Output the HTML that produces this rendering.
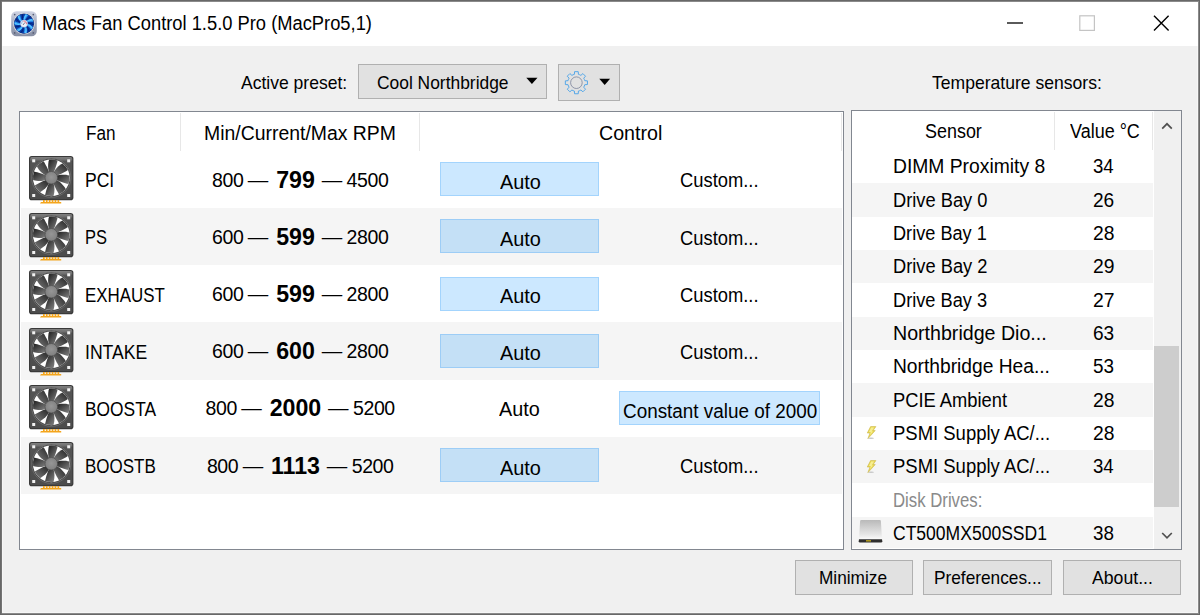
<!DOCTYPE html>
<html lang="en"><head><meta charset="utf-8"><title>Macs Fan Control</title>
<style>
html,body{margin:0;padding:0}
body{width:1200px;height:615px;overflow:hidden;position:relative;background:#f0f0f0;font-family:"Liberation Sans",sans-serif;font-size:19.5px;color:#000}
.abs,.t,.rpm,.btn,.row,.ab{position:absolute}
.t{white-space:nowrap;line-height:1;transform-origin:0 0}
#frame{left:0;top:0;width:1198px;height:613px;border:1px solid #686868;z-index:50;pointer-events:none;box-shadow:inset 0 0 0 1px #8a8a8a,inset 0 0 0 2px rgba(255,255,255,.4)}
#titlebar{left:2px;top:2px;width:1196px;height:44px;background:#fff}
.btn{background:#e1e1e1;border:1px solid #b0b0b0;box-sizing:border-box}
.tbl{position:absolute;background:#fff;border:1px solid #828790;box-sizing:border-box}
.row{background:#f5f5f5}
.hd{position:absolute;width:1px;background:#e7e7e7}
.ab{background:#cce8ff;border:1px solid #a3d4fd;box-sizing:border-box}
.ab.g{background:#c4e0f6;border-color:#9dcdf6}
.rpm{width:239px;height:57px;line-height:55.6px;text-align:center;white-space:nowrap}
.rpm{letter-spacing:-0.4px;word-spacing:-0.6px}
.rpm b{font-size:23.2px;letter-spacing:0;margin:0 2.4px 0 3.4px;position:relative;top:1px}
.rpm i{font-style:normal;font-size:20.5px;letter-spacing:0}
svg{position:absolute;overflow:visible}

</style></head>
<body>
<div class="abs" id="titlebar"></div>
<!-- fan table -->
<div class="tbl" style="left:19px;top:111px;width:825px;height:439px"></div>
<div class="hd" style="left:180px;top:113px;height:38px"></div>
<div class="hd" style="left:419px;top:113px;height:38px"></div>
<div class="hd" style="left:841px;top:113px;height:38px"></div>
<div class="row" style="left:21px;top:208px;width:821px;height:57px"></div>
<div class="row" style="left:21px;top:322px;width:821px;height:57.5px"></div>
<div class="row" style="left:21px;top:437px;width:821px;height:57px"></div>
<!-- sensor table -->
<div class="tbl" style="left:851px;top:110px;width:331px;height:440px"></div>
<div class="hd" style="left:1054px;top:112px;height:38px"></div>
<div class="hd" style="left:1152px;top:112px;height:38px"></div>
<div class="row" style="left:852px;top:183.33px;width:301px;height:33.34px"></div>
<div class="row" style="left:852px;top:250px;width:301px;height:33.34px"></div>
<div class="row" style="left:852px;top:316.67px;width:301px;height:33.34px"></div>
<div class="row" style="left:852px;top:383.33px;width:301px;height:33.34px"></div>
<div class="row" style="left:852px;top:450px;width:301px;height:33.34px"></div>
<div class="row" style="left:852px;top:516.67px;width:301px;height:31px"></div>
<!-- scrollbar -->
<div class="abs" id="sbar" style="left:1154px;top:111px;width:27px;height:438px;background:#f0f0f0"></div>
<div class="abs" id="thumb" style="left:1154px;top:346.3px;width:25.3px;height:160.4px;background:#cdcdcd"></div>
<!-- buttons -->
<div class="btn" style="left:358px;top:64px;width:189px;height:35px"></div>
<div class="btn" style="left:558px;top:64px;width:62px;height:37px"></div>
<div class="btn" style="left:795px;top:560px;width:118px;height:35px"></div>
<div class="btn" style="left:923px;top:560px;width:129px;height:35px"></div>
<div class="btn" style="left:1063px;top:560px;width:118px;height:35px"></div>
<!-- auto buttons -->
<div class="ab" style="left:440px;top:162.00px;width:159px;height:34px"></div>
<div class="ab g" style="left:440px;top:219.25px;width:159px;height:34px"></div>
<div class="ab" style="left:440px;top:276.50px;width:159px;height:34px"></div>
<div class="ab g" style="left:440px;top:333.75px;width:159px;height:34px"></div>
<div class="ab" style="left:619px;top:391.00px;width:201px;height:34px"></div>
<div class="ab g" style="left:440px;top:448.25px;width:159px;height:34px"></div>
<div class="rpm" id="rp0" style="top:151.60px;left:180.7px">800 <i>—</i> <b>799</b> <i>—</i> 4500</div>
<div class="rpm" id="rp1" style="top:208.80px;left:180.7px">600 <i>—</i> <b>599</b> <i>—</i> 2800</div>
<div class="rpm" id="rp2" style="top:266.00px;left:180.7px">600 <i>—</i> <b>599</b> <i>—</i> 2800</div>
<div class="rpm" id="rp3" style="top:323.20px;left:180.7px">600 <i>—</i> <b>600</b> <i>—</i> 2800</div>
<div class="rpm" id="rp4" style="top:380.40px;left:180.7px">800 <i>—</i> <b>2000</b> <i>—</i> 5200</div>
<div class="rpm" id="rp5" style="top:437.60px;left:180.7px">800 <i>—</i> <b>1113</b> <i>—</i> 5200</div>
<span class="t" id="title" style="left:41.67px;top:14.40px;transform:scaleX(0.9396)">Macs Fan Control 1.5.0 Pro (MacPro5,1)</span>
<span class="t" id="ap" style="left:241.34px;top:75.41px;font-size:17.75px;transform:scaleX(0.9878)">Active preset:</span>
<span class="t" id="cn" style="left:377.13px;top:74.61px;font-size:17.75px;transform:scaleX(0.9802)">Cool Northbridge</span>
<span class="t" id="ts" style="left:932.45px;top:75.21px;font-size:17.75px;transform:scaleX(0.9891)">Temperature sensors:</span>
<span class="t" id="hfan" style="left:86.09px;top:123.51px;transform:scaleX(0.8802)">Fan</span>
<span class="t" id="hrpm" style="left:203.51px;top:123.51px;transform:scaleX(0.9954)">Min/Current/Max RPM</span>
<span class="t" id="hctl" style="left:599.26px;top:123.51px;transform:scaleX(1.0075)">Control</span>
<span class="t" id="hsen" style="left:925.40px;top:122.00px;transform:scaleX(0.9200)">Sensor</span>
<span class="t" id="hval" style="left:1069.50px;top:122.00px;transform:scaleX(0.9219)">Value °C</span>
<span class="t" id="fl0" style="left:84.55px;top:171.11px;transform:scaleX(0.8998)">PCI</span>
<span class="t" id="au0" style="left:500.09px;top:172.80px;transform:scaleX(1.0199)">Auto</span>
<span class="t" id="cu0" style="left:680.22px;top:171.40px;transform:scaleX(0.9413)">Custom...</span>
<span class="t" id="fl1" style="left:85.42px;top:228.30px;transform:scaleX(0.8429)">PS</span>
<span class="t" id="au1" style="left:500.09px;top:230.00px;transform:scaleX(1.0199)">Auto</span>
<span class="t" id="cu1" style="left:680.22px;top:228.60px;transform:scaleX(0.9413)">Custom...</span>
<span class="t" id="fl2" style="left:85.39px;top:285.50px;transform:scaleX(0.8658)">EXHAUST</span>
<span class="t" id="au2" style="left:500.09px;top:287.21px;transform:scaleX(1.0199)">Auto</span>
<span class="t" id="cu2" style="left:680.22px;top:285.81px;transform:scaleX(0.9413)">Custom...</span>
<span class="t" id="fl3" style="left:85.28px;top:342.71px;transform:scaleX(0.9021)">INTAKE</span>
<span class="t" id="au3" style="left:500.09px;top:344.41px;transform:scaleX(1.0199)">Auto</span>
<span class="t" id="cu3" style="left:680.22px;top:343.01px;transform:scaleX(0.9413)">Custom...</span>
<span class="t" id="fl4" style="left:84.53px;top:399.91px;transform:scaleX(0.8907)">BOOSTA</span>
<span class="t" id="au4" style="left:499.42px;top:399.91px;transform:scaleX(1.0143)">Auto</span>
<span class="t" id="cu4" style="left:623.21px;top:401.51px;transform:scaleX(0.9689)">Constant value of 2000</span>
<span class="t" id="fl5" style="left:85.38px;top:457.11px;transform:scaleX(0.8715)">BOOSTB</span>
<span class="t" id="au5" style="left:500.09px;top:458.80px;transform:scaleX(1.0199)">Auto</span>
<span class="t" id="cu5" style="left:680.22px;top:457.40px;transform:scaleX(0.9413)">Custom...</span>
<span class="t" id="sl0" style="left:892.96px;top:157.40px;transform:scaleX(0.9888)">DIMM Proximity 8</span>
<span class="t" id="sv0" style="left:1093.05px;top:157.41px;transform:scaleX(0.9553)">34</span>
<span class="t" id="sl1" style="left:892.70px;top:190.74px;transform:scaleX(0.9368)">Drive Bay 0</span>
<span class="t" id="sv1" style="left:1092.88px;top:190.73px;transform:scaleX(0.9792)">26</span>
<span class="t" id="sl2" style="left:892.75px;top:224.07px;transform:scaleX(0.9305)">Drive Bay 1</span>
<span class="t" id="sv2" style="left:1093.22px;top:224.07px;transform:scaleX(0.9893)">28</span>
<span class="t" id="sl3" style="left:892.72px;top:257.40px;transform:scaleX(0.9369)">Drive Bay 2</span>
<span class="t" id="sv3" style="left:1093.27px;top:257.41px;transform:scaleX(0.9907)">29</span>
<span class="t" id="sl4" style="left:892.64px;top:290.74px;transform:scaleX(0.9334)">Drive Bay 3</span>
<span class="t" id="sv4" style="left:1092.82px;top:290.73px;transform:scaleX(0.9935)">27</span>
<span class="t" id="sl5" style="left:892.59px;top:324.07px;transform:scaleX(1.0056)">Northbridge Dio...</span>
<span class="t" id="sv5" style="left:1092.96px;top:324.07px;transform:scaleX(0.9778)">63</span>
<span class="t" id="sl6" style="left:892.75px;top:357.40px;transform:scaleX(0.9850)">Northbridge Hea...</span>
<span class="t" id="sv6" style="left:1093.21px;top:357.41px;transform:scaleX(0.9688)">53</span>
<span class="t" id="sl7" style="left:893.07px;top:390.74px;transform:scaleX(0.9396)">PCIE Ambient</span>
<span class="t" id="sv7" style="left:1093.22px;top:390.74px;transform:scaleX(0.9893)">28</span>
<span class="t" id="sl8" style="left:892.75px;top:424.07px;transform:scaleX(0.9472)">PSMI Supply AC/...</span>
<span class="t" id="sv8" style="left:1093.22px;top:424.07px;transform:scaleX(0.9893)">28</span>
<span class="t" id="sl9" style="left:892.75px;top:457.40px;transform:scaleX(0.9472)">PSMI Supply AC/...</span>
<span class="t" id="sv9" style="left:1093.05px;top:457.41px;transform:scaleX(0.9553)">34</span>
<span class="t" id="sl10" style="left:892.92px;top:490.74px;color:#8a8a8a;transform:scaleX(0.8588)">Disk Drives:</span>
<span class="t" id="sl11" style="left:892.84px;top:524.07px;transform:scaleX(0.8991)">CT500MX500SSD1</span>
<span class="t" id="sv11" style="left:1092.95px;top:524.07px;transform:scaleX(0.9666)">38</span>
<span class="t" id="bmin" style="left:819.08px;top:570.41px;font-size:17.75px;transform:scaleX(0.9715)">Minimize</span>
<span class="t" id="bpre" style="left:934.46px;top:570.41px;font-size:17.75px;transform:scaleX(0.9727)">Preferences...</span>
<span class="t" id="babt" style="left:1091.84px;top:570.41px;font-size:17.75px;transform:scaleX(0.9951)">About...</span>
<svg width="0" height="0" style="position:absolute"><defs>
<linearGradient id="fsq" x1="0" y1="0" x2="0" y2="1"><stop offset="0" stop-color="#808080"/><stop offset="0.06" stop-color="#707070"/><stop offset="0.1" stop-color="#545454"/><stop offset="1" stop-color="#4c4c4c"/></linearGradient>
<linearGradient id="bg0" x1="0" y1="0" x2="1" y2="1"><stop offset="0" stop-color="#1c1c1c"/><stop offset="1" stop-color="#848484"/></linearGradient>
<linearGradient id="bg1" x1="1" y1="0" x2="0" y2="1"><stop offset="0" stop-color="#222"/><stop offset="1" stop-color="#7e7e7e"/></linearGradient>
<radialGradient id="hub" cx="0.5" cy="0.45" r="0.6"><stop offset="0" stop-color="#969696"/><stop offset="0.8" stop-color="#828282"/><stop offset="1" stop-color="#5c5c5c"/></radialGradient>
</defs></svg>
<svg style="left:28.7px;top:155.9px" width="46" height="49" viewBox="0 0 46 49">
<rect x="0" y="0" width="44.4" height="44.2" rx="2.8" fill="#3a3a3a"/>
<rect x="1.1" y="1.1" width="42.2" height="42" rx="1.8" fill="url(#fsq)"/>
<circle cx="22.3" cy="21.8" r="19.6" fill="#454545" stroke="#7d7d7d" stroke-width="0.6"/>
<circle cx="22.3" cy="21.8" r="18.4" fill="#fff"/>
<path d="M20.28,16.69 L19.77,15.16 L19.39,13.60 L19.21,11.97 L19.15,10.32 L19.20,8.66 L19.37,6.99 L19.66,5.31 L20.07,3.64 A18.3,18.3 0 0 1 28.56,4.60 L28.17,6.17 L27.75,7.72 L27.30,9.26 L26.82,10.79 L26.31,12.31 L25.77,13.82 L25.11,15.28 L24.41,16.72Z" fill="url(#bg0)"/><path d="M24.48,16.75 L25.20,15.32 L26.04,13.95 L27.07,12.67 L28.19,11.46 L29.40,10.32 L30.71,9.26 L32.10,8.27 L33.57,7.38 A18.3,18.3 0 0 1 38.89,14.07 L37.51,14.90 L36.11,15.70 L34.70,16.47 L33.28,17.22 L31.85,17.93 L30.40,18.61 L28.90,19.18 L27.39,19.70Z" fill="url(#bg1)"/><path d="M27.41,19.78 L28.94,19.27 L30.50,18.89 L32.13,18.71 L33.78,18.65 L35.44,18.70 L37.11,18.87 L38.79,19.16 L40.46,19.57 A18.3,18.3 0 0 1 39.50,28.06 L37.93,27.67 L36.38,27.25 L34.84,26.80 L33.31,26.32 L31.79,25.81 L30.28,25.27 L28.82,24.61 L27.38,23.91Z" fill="url(#bg0)"/><path d="M27.35,23.98 L28.78,24.70 L30.15,25.54 L31.43,26.57 L32.64,27.69 L33.78,28.90 L34.84,30.21 L35.83,31.60 L36.72,33.07 A18.3,18.3 0 0 1 30.03,38.39 L29.20,37.01 L28.40,35.61 L27.63,34.20 L26.88,32.78 L26.17,31.35 L25.49,29.90 L24.92,28.40 L24.40,26.89Z" fill="url(#bg1)"/><path d="M24.32,26.91 L24.83,28.44 L25.21,30.00 L25.39,31.63 L25.45,33.28 L25.40,34.94 L25.23,36.61 L24.94,38.29 L24.53,39.96 A18.3,18.3 0 0 1 16.04,39.00 L16.43,37.43 L16.85,35.88 L17.30,34.34 L17.78,32.81 L18.29,31.29 L18.83,29.78 L19.49,28.32 L20.19,26.88Z" fill="url(#bg0)"/><path d="M20.12,26.85 L19.40,28.28 L18.56,29.65 L17.53,30.93 L16.41,32.14 L15.20,33.28 L13.89,34.34 L12.50,35.33 L11.03,36.22 A18.3,18.3 0 0 1 5.71,29.53 L7.09,28.70 L8.49,27.90 L9.90,27.13 L11.32,26.38 L12.75,25.67 L14.20,24.99 L15.70,24.42 L17.21,23.90Z" fill="url(#bg1)"/><path d="M17.19,23.82 L15.66,24.33 L14.10,24.71 L12.47,24.89 L10.82,24.95 L9.16,24.90 L7.49,24.73 L5.81,24.44 L4.14,24.03 A18.3,18.3 0 0 1 5.10,15.54 L6.67,15.93 L8.22,16.35 L9.76,16.80 L11.29,17.28 L12.81,17.79 L14.32,18.33 L15.78,18.99 L17.22,19.69Z" fill="url(#bg0)"/><path d="M17.25,19.62 L15.82,18.90 L14.45,18.06 L13.17,17.03 L11.96,15.91 L10.82,14.70 L9.76,13.39 L8.77,12.00 L7.88,10.53 A18.3,18.3 0 0 1 14.57,5.21 L15.40,6.59 L16.20,7.99 L16.97,9.40 L17.72,10.82 L18.43,12.25 L19.11,13.70 L19.68,15.20 L20.20,16.71Z" fill="url(#bg1)"/>
<circle cx="22.3" cy="21.8" r="6.3" fill="url(#hub)" stroke="#4a4a4a" stroke-width="0.6"/>
<rect x="3.2" y="3.3" width="3" height="3" fill="#f2f2f2"/><rect x="38.2" y="3.3" width="3" height="3" fill="#f2f2f2"/>
<rect x="3.2" y="38" width="3" height="3" fill="#f2f2f2"/><rect x="38.2" y="38" width="3" height="3" fill="#f2f2f2"/>
<path d="M11,47.5 h21.2 v-1.5 h-2 v-1.9 h-1.7 v1.9 h-1.2 v-1.9 h-1.7 v1.9 h-1.2 v-1.9 h-1.7 v1.9 h-1.2 v-1.9 h-1.7 v1.9 h-1.2 v-1.9 h-1.7 v1.9 h-1.2 v-1.9 h-1.7 v1.9 h-2z" fill="#f4a51c"/></svg>
<svg style="left:28.7px;top:213.1px" width="46" height="49" viewBox="0 0 46 49">
<rect x="0" y="0" width="44.4" height="44.2" rx="2.8" fill="#3a3a3a"/>
<rect x="1.1" y="1.1" width="42.2" height="42" rx="1.8" fill="url(#fsq)"/>
<circle cx="22.3" cy="21.8" r="19.6" fill="#454545" stroke="#7d7d7d" stroke-width="0.6"/>
<circle cx="22.3" cy="21.8" r="18.4" fill="#fff"/>
<path d="M20.28,16.69 L19.77,15.16 L19.39,13.60 L19.21,11.97 L19.15,10.32 L19.20,8.66 L19.37,6.99 L19.66,5.31 L20.07,3.64 A18.3,18.3 0 0 1 28.56,4.60 L28.17,6.17 L27.75,7.72 L27.30,9.26 L26.82,10.79 L26.31,12.31 L25.77,13.82 L25.11,15.28 L24.41,16.72Z" fill="url(#bg0)"/><path d="M24.48,16.75 L25.20,15.32 L26.04,13.95 L27.07,12.67 L28.19,11.46 L29.40,10.32 L30.71,9.26 L32.10,8.27 L33.57,7.38 A18.3,18.3 0 0 1 38.89,14.07 L37.51,14.90 L36.11,15.70 L34.70,16.47 L33.28,17.22 L31.85,17.93 L30.40,18.61 L28.90,19.18 L27.39,19.70Z" fill="url(#bg1)"/><path d="M27.41,19.78 L28.94,19.27 L30.50,18.89 L32.13,18.71 L33.78,18.65 L35.44,18.70 L37.11,18.87 L38.79,19.16 L40.46,19.57 A18.3,18.3 0 0 1 39.50,28.06 L37.93,27.67 L36.38,27.25 L34.84,26.80 L33.31,26.32 L31.79,25.81 L30.28,25.27 L28.82,24.61 L27.38,23.91Z" fill="url(#bg0)"/><path d="M27.35,23.98 L28.78,24.70 L30.15,25.54 L31.43,26.57 L32.64,27.69 L33.78,28.90 L34.84,30.21 L35.83,31.60 L36.72,33.07 A18.3,18.3 0 0 1 30.03,38.39 L29.20,37.01 L28.40,35.61 L27.63,34.20 L26.88,32.78 L26.17,31.35 L25.49,29.90 L24.92,28.40 L24.40,26.89Z" fill="url(#bg1)"/><path d="M24.32,26.91 L24.83,28.44 L25.21,30.00 L25.39,31.63 L25.45,33.28 L25.40,34.94 L25.23,36.61 L24.94,38.29 L24.53,39.96 A18.3,18.3 0 0 1 16.04,39.00 L16.43,37.43 L16.85,35.88 L17.30,34.34 L17.78,32.81 L18.29,31.29 L18.83,29.78 L19.49,28.32 L20.19,26.88Z" fill="url(#bg0)"/><path d="M20.12,26.85 L19.40,28.28 L18.56,29.65 L17.53,30.93 L16.41,32.14 L15.20,33.28 L13.89,34.34 L12.50,35.33 L11.03,36.22 A18.3,18.3 0 0 1 5.71,29.53 L7.09,28.70 L8.49,27.90 L9.90,27.13 L11.32,26.38 L12.75,25.67 L14.20,24.99 L15.70,24.42 L17.21,23.90Z" fill="url(#bg1)"/><path d="M17.19,23.82 L15.66,24.33 L14.10,24.71 L12.47,24.89 L10.82,24.95 L9.16,24.90 L7.49,24.73 L5.81,24.44 L4.14,24.03 A18.3,18.3 0 0 1 5.10,15.54 L6.67,15.93 L8.22,16.35 L9.76,16.80 L11.29,17.28 L12.81,17.79 L14.32,18.33 L15.78,18.99 L17.22,19.69Z" fill="url(#bg0)"/><path d="M17.25,19.62 L15.82,18.90 L14.45,18.06 L13.17,17.03 L11.96,15.91 L10.82,14.70 L9.76,13.39 L8.77,12.00 L7.88,10.53 A18.3,18.3 0 0 1 14.57,5.21 L15.40,6.59 L16.20,7.99 L16.97,9.40 L17.72,10.82 L18.43,12.25 L19.11,13.70 L19.68,15.20 L20.20,16.71Z" fill="url(#bg1)"/>
<circle cx="22.3" cy="21.8" r="6.3" fill="url(#hub)" stroke="#4a4a4a" stroke-width="0.6"/>
<rect x="3.2" y="3.3" width="3" height="3" fill="#f2f2f2"/><rect x="38.2" y="3.3" width="3" height="3" fill="#f2f2f2"/>
<rect x="3.2" y="38" width="3" height="3" fill="#f2f2f2"/><rect x="38.2" y="38" width="3" height="3" fill="#f2f2f2"/>
<path d="M11,47.5 h21.2 v-1.5 h-2 v-1.9 h-1.7 v1.9 h-1.2 v-1.9 h-1.7 v1.9 h-1.2 v-1.9 h-1.7 v1.9 h-1.2 v-1.9 h-1.7 v1.9 h-1.2 v-1.9 h-1.7 v1.9 h-1.2 v-1.9 h-1.7 v1.9 h-2z" fill="#f4a51c"/></svg>
<svg style="left:28.7px;top:270.3px" width="46" height="49" viewBox="0 0 46 49">
<rect x="0" y="0" width="44.4" height="44.2" rx="2.8" fill="#3a3a3a"/>
<rect x="1.1" y="1.1" width="42.2" height="42" rx="1.8" fill="url(#fsq)"/>
<circle cx="22.3" cy="21.8" r="19.6" fill="#454545" stroke="#7d7d7d" stroke-width="0.6"/>
<circle cx="22.3" cy="21.8" r="18.4" fill="#fff"/>
<path d="M20.28,16.69 L19.77,15.16 L19.39,13.60 L19.21,11.97 L19.15,10.32 L19.20,8.66 L19.37,6.99 L19.66,5.31 L20.07,3.64 A18.3,18.3 0 0 1 28.56,4.60 L28.17,6.17 L27.75,7.72 L27.30,9.26 L26.82,10.79 L26.31,12.31 L25.77,13.82 L25.11,15.28 L24.41,16.72Z" fill="url(#bg0)"/><path d="M24.48,16.75 L25.20,15.32 L26.04,13.95 L27.07,12.67 L28.19,11.46 L29.40,10.32 L30.71,9.26 L32.10,8.27 L33.57,7.38 A18.3,18.3 0 0 1 38.89,14.07 L37.51,14.90 L36.11,15.70 L34.70,16.47 L33.28,17.22 L31.85,17.93 L30.40,18.61 L28.90,19.18 L27.39,19.70Z" fill="url(#bg1)"/><path d="M27.41,19.78 L28.94,19.27 L30.50,18.89 L32.13,18.71 L33.78,18.65 L35.44,18.70 L37.11,18.87 L38.79,19.16 L40.46,19.57 A18.3,18.3 0 0 1 39.50,28.06 L37.93,27.67 L36.38,27.25 L34.84,26.80 L33.31,26.32 L31.79,25.81 L30.28,25.27 L28.82,24.61 L27.38,23.91Z" fill="url(#bg0)"/><path d="M27.35,23.98 L28.78,24.70 L30.15,25.54 L31.43,26.57 L32.64,27.69 L33.78,28.90 L34.84,30.21 L35.83,31.60 L36.72,33.07 A18.3,18.3 0 0 1 30.03,38.39 L29.20,37.01 L28.40,35.61 L27.63,34.20 L26.88,32.78 L26.17,31.35 L25.49,29.90 L24.92,28.40 L24.40,26.89Z" fill="url(#bg1)"/><path d="M24.32,26.91 L24.83,28.44 L25.21,30.00 L25.39,31.63 L25.45,33.28 L25.40,34.94 L25.23,36.61 L24.94,38.29 L24.53,39.96 A18.3,18.3 0 0 1 16.04,39.00 L16.43,37.43 L16.85,35.88 L17.30,34.34 L17.78,32.81 L18.29,31.29 L18.83,29.78 L19.49,28.32 L20.19,26.88Z" fill="url(#bg0)"/><path d="M20.12,26.85 L19.40,28.28 L18.56,29.65 L17.53,30.93 L16.41,32.14 L15.20,33.28 L13.89,34.34 L12.50,35.33 L11.03,36.22 A18.3,18.3 0 0 1 5.71,29.53 L7.09,28.70 L8.49,27.90 L9.90,27.13 L11.32,26.38 L12.75,25.67 L14.20,24.99 L15.70,24.42 L17.21,23.90Z" fill="url(#bg1)"/><path d="M17.19,23.82 L15.66,24.33 L14.10,24.71 L12.47,24.89 L10.82,24.95 L9.16,24.90 L7.49,24.73 L5.81,24.44 L4.14,24.03 A18.3,18.3 0 0 1 5.10,15.54 L6.67,15.93 L8.22,16.35 L9.76,16.80 L11.29,17.28 L12.81,17.79 L14.32,18.33 L15.78,18.99 L17.22,19.69Z" fill="url(#bg0)"/><path d="M17.25,19.62 L15.82,18.90 L14.45,18.06 L13.17,17.03 L11.96,15.91 L10.82,14.70 L9.76,13.39 L8.77,12.00 L7.88,10.53 A18.3,18.3 0 0 1 14.57,5.21 L15.40,6.59 L16.20,7.99 L16.97,9.40 L17.72,10.82 L18.43,12.25 L19.11,13.70 L19.68,15.20 L20.20,16.71Z" fill="url(#bg1)"/>
<circle cx="22.3" cy="21.8" r="6.3" fill="url(#hub)" stroke="#4a4a4a" stroke-width="0.6"/>
<rect x="3.2" y="3.3" width="3" height="3" fill="#f2f2f2"/><rect x="38.2" y="3.3" width="3" height="3" fill="#f2f2f2"/>
<rect x="3.2" y="38" width="3" height="3" fill="#f2f2f2"/><rect x="38.2" y="38" width="3" height="3" fill="#f2f2f2"/>
<path d="M11,47.5 h21.2 v-1.5 h-2 v-1.9 h-1.7 v1.9 h-1.2 v-1.9 h-1.7 v1.9 h-1.2 v-1.9 h-1.7 v1.9 h-1.2 v-1.9 h-1.7 v1.9 h-1.2 v-1.9 h-1.7 v1.9 h-1.2 v-1.9 h-1.7 v1.9 h-2z" fill="#f4a51c"/></svg>
<svg style="left:28.7px;top:327.5px" width="46" height="49" viewBox="0 0 46 49">
<rect x="0" y="0" width="44.4" height="44.2" rx="2.8" fill="#3a3a3a"/>
<rect x="1.1" y="1.1" width="42.2" height="42" rx="1.8" fill="url(#fsq)"/>
<circle cx="22.3" cy="21.8" r="19.6" fill="#454545" stroke="#7d7d7d" stroke-width="0.6"/>
<circle cx="22.3" cy="21.8" r="18.4" fill="#fff"/>
<path d="M20.28,16.69 L19.77,15.16 L19.39,13.60 L19.21,11.97 L19.15,10.32 L19.20,8.66 L19.37,6.99 L19.66,5.31 L20.07,3.64 A18.3,18.3 0 0 1 28.56,4.60 L28.17,6.17 L27.75,7.72 L27.30,9.26 L26.82,10.79 L26.31,12.31 L25.77,13.82 L25.11,15.28 L24.41,16.72Z" fill="url(#bg0)"/><path d="M24.48,16.75 L25.20,15.32 L26.04,13.95 L27.07,12.67 L28.19,11.46 L29.40,10.32 L30.71,9.26 L32.10,8.27 L33.57,7.38 A18.3,18.3 0 0 1 38.89,14.07 L37.51,14.90 L36.11,15.70 L34.70,16.47 L33.28,17.22 L31.85,17.93 L30.40,18.61 L28.90,19.18 L27.39,19.70Z" fill="url(#bg1)"/><path d="M27.41,19.78 L28.94,19.27 L30.50,18.89 L32.13,18.71 L33.78,18.65 L35.44,18.70 L37.11,18.87 L38.79,19.16 L40.46,19.57 A18.3,18.3 0 0 1 39.50,28.06 L37.93,27.67 L36.38,27.25 L34.84,26.80 L33.31,26.32 L31.79,25.81 L30.28,25.27 L28.82,24.61 L27.38,23.91Z" fill="url(#bg0)"/><path d="M27.35,23.98 L28.78,24.70 L30.15,25.54 L31.43,26.57 L32.64,27.69 L33.78,28.90 L34.84,30.21 L35.83,31.60 L36.72,33.07 A18.3,18.3 0 0 1 30.03,38.39 L29.20,37.01 L28.40,35.61 L27.63,34.20 L26.88,32.78 L26.17,31.35 L25.49,29.90 L24.92,28.40 L24.40,26.89Z" fill="url(#bg1)"/><path d="M24.32,26.91 L24.83,28.44 L25.21,30.00 L25.39,31.63 L25.45,33.28 L25.40,34.94 L25.23,36.61 L24.94,38.29 L24.53,39.96 A18.3,18.3 0 0 1 16.04,39.00 L16.43,37.43 L16.85,35.88 L17.30,34.34 L17.78,32.81 L18.29,31.29 L18.83,29.78 L19.49,28.32 L20.19,26.88Z" fill="url(#bg0)"/><path d="M20.12,26.85 L19.40,28.28 L18.56,29.65 L17.53,30.93 L16.41,32.14 L15.20,33.28 L13.89,34.34 L12.50,35.33 L11.03,36.22 A18.3,18.3 0 0 1 5.71,29.53 L7.09,28.70 L8.49,27.90 L9.90,27.13 L11.32,26.38 L12.75,25.67 L14.20,24.99 L15.70,24.42 L17.21,23.90Z" fill="url(#bg1)"/><path d="M17.19,23.82 L15.66,24.33 L14.10,24.71 L12.47,24.89 L10.82,24.95 L9.16,24.90 L7.49,24.73 L5.81,24.44 L4.14,24.03 A18.3,18.3 0 0 1 5.10,15.54 L6.67,15.93 L8.22,16.35 L9.76,16.80 L11.29,17.28 L12.81,17.79 L14.32,18.33 L15.78,18.99 L17.22,19.69Z" fill="url(#bg0)"/><path d="M17.25,19.62 L15.82,18.90 L14.45,18.06 L13.17,17.03 L11.96,15.91 L10.82,14.70 L9.76,13.39 L8.77,12.00 L7.88,10.53 A18.3,18.3 0 0 1 14.57,5.21 L15.40,6.59 L16.20,7.99 L16.97,9.40 L17.72,10.82 L18.43,12.25 L19.11,13.70 L19.68,15.20 L20.20,16.71Z" fill="url(#bg1)"/>
<circle cx="22.3" cy="21.8" r="6.3" fill="url(#hub)" stroke="#4a4a4a" stroke-width="0.6"/>
<rect x="3.2" y="3.3" width="3" height="3" fill="#f2f2f2"/><rect x="38.2" y="3.3" width="3" height="3" fill="#f2f2f2"/>
<rect x="3.2" y="38" width="3" height="3" fill="#f2f2f2"/><rect x="38.2" y="38" width="3" height="3" fill="#f2f2f2"/>
<path d="M11,47.5 h21.2 v-1.5 h-2 v-1.9 h-1.7 v1.9 h-1.2 v-1.9 h-1.7 v1.9 h-1.2 v-1.9 h-1.7 v1.9 h-1.2 v-1.9 h-1.7 v1.9 h-1.2 v-1.9 h-1.7 v1.9 h-1.2 v-1.9 h-1.7 v1.9 h-2z" fill="#f4a51c"/></svg>
<svg style="left:28.7px;top:384.7px" width="46" height="49" viewBox="0 0 46 49">
<rect x="0" y="0" width="44.4" height="44.2" rx="2.8" fill="#3a3a3a"/>
<rect x="1.1" y="1.1" width="42.2" height="42" rx="1.8" fill="url(#fsq)"/>
<circle cx="22.3" cy="21.8" r="19.6" fill="#454545" stroke="#7d7d7d" stroke-width="0.6"/>
<circle cx="22.3" cy="21.8" r="18.4" fill="#fff"/>
<path d="M20.28,16.69 L19.77,15.16 L19.39,13.60 L19.21,11.97 L19.15,10.32 L19.20,8.66 L19.37,6.99 L19.66,5.31 L20.07,3.64 A18.3,18.3 0 0 1 28.56,4.60 L28.17,6.17 L27.75,7.72 L27.30,9.26 L26.82,10.79 L26.31,12.31 L25.77,13.82 L25.11,15.28 L24.41,16.72Z" fill="url(#bg0)"/><path d="M24.48,16.75 L25.20,15.32 L26.04,13.95 L27.07,12.67 L28.19,11.46 L29.40,10.32 L30.71,9.26 L32.10,8.27 L33.57,7.38 A18.3,18.3 0 0 1 38.89,14.07 L37.51,14.90 L36.11,15.70 L34.70,16.47 L33.28,17.22 L31.85,17.93 L30.40,18.61 L28.90,19.18 L27.39,19.70Z" fill="url(#bg1)"/><path d="M27.41,19.78 L28.94,19.27 L30.50,18.89 L32.13,18.71 L33.78,18.65 L35.44,18.70 L37.11,18.87 L38.79,19.16 L40.46,19.57 A18.3,18.3 0 0 1 39.50,28.06 L37.93,27.67 L36.38,27.25 L34.84,26.80 L33.31,26.32 L31.79,25.81 L30.28,25.27 L28.82,24.61 L27.38,23.91Z" fill="url(#bg0)"/><path d="M27.35,23.98 L28.78,24.70 L30.15,25.54 L31.43,26.57 L32.64,27.69 L33.78,28.90 L34.84,30.21 L35.83,31.60 L36.72,33.07 A18.3,18.3 0 0 1 30.03,38.39 L29.20,37.01 L28.40,35.61 L27.63,34.20 L26.88,32.78 L26.17,31.35 L25.49,29.90 L24.92,28.40 L24.40,26.89Z" fill="url(#bg1)"/><path d="M24.32,26.91 L24.83,28.44 L25.21,30.00 L25.39,31.63 L25.45,33.28 L25.40,34.94 L25.23,36.61 L24.94,38.29 L24.53,39.96 A18.3,18.3 0 0 1 16.04,39.00 L16.43,37.43 L16.85,35.88 L17.30,34.34 L17.78,32.81 L18.29,31.29 L18.83,29.78 L19.49,28.32 L20.19,26.88Z" fill="url(#bg0)"/><path d="M20.12,26.85 L19.40,28.28 L18.56,29.65 L17.53,30.93 L16.41,32.14 L15.20,33.28 L13.89,34.34 L12.50,35.33 L11.03,36.22 A18.3,18.3 0 0 1 5.71,29.53 L7.09,28.70 L8.49,27.90 L9.90,27.13 L11.32,26.38 L12.75,25.67 L14.20,24.99 L15.70,24.42 L17.21,23.90Z" fill="url(#bg1)"/><path d="M17.19,23.82 L15.66,24.33 L14.10,24.71 L12.47,24.89 L10.82,24.95 L9.16,24.90 L7.49,24.73 L5.81,24.44 L4.14,24.03 A18.3,18.3 0 0 1 5.10,15.54 L6.67,15.93 L8.22,16.35 L9.76,16.80 L11.29,17.28 L12.81,17.79 L14.32,18.33 L15.78,18.99 L17.22,19.69Z" fill="url(#bg0)"/><path d="M17.25,19.62 L15.82,18.90 L14.45,18.06 L13.17,17.03 L11.96,15.91 L10.82,14.70 L9.76,13.39 L8.77,12.00 L7.88,10.53 A18.3,18.3 0 0 1 14.57,5.21 L15.40,6.59 L16.20,7.99 L16.97,9.40 L17.72,10.82 L18.43,12.25 L19.11,13.70 L19.68,15.20 L20.20,16.71Z" fill="url(#bg1)"/>
<circle cx="22.3" cy="21.8" r="6.3" fill="url(#hub)" stroke="#4a4a4a" stroke-width="0.6"/>
<rect x="3.2" y="3.3" width="3" height="3" fill="#f2f2f2"/><rect x="38.2" y="3.3" width="3" height="3" fill="#f2f2f2"/>
<rect x="3.2" y="38" width="3" height="3" fill="#f2f2f2"/><rect x="38.2" y="38" width="3" height="3" fill="#f2f2f2"/>
<path d="M11,47.5 h21.2 v-1.5 h-2 v-1.9 h-1.7 v1.9 h-1.2 v-1.9 h-1.7 v1.9 h-1.2 v-1.9 h-1.7 v1.9 h-1.2 v-1.9 h-1.7 v1.9 h-1.2 v-1.9 h-1.7 v1.9 h-1.2 v-1.9 h-1.7 v1.9 h-2z" fill="#f4a51c"/></svg>
<svg style="left:28.7px;top:441.9px" width="46" height="49" viewBox="0 0 46 49">
<rect x="0" y="0" width="44.4" height="44.2" rx="2.8" fill="#3a3a3a"/>
<rect x="1.1" y="1.1" width="42.2" height="42" rx="1.8" fill="url(#fsq)"/>
<circle cx="22.3" cy="21.8" r="19.6" fill="#454545" stroke="#7d7d7d" stroke-width="0.6"/>
<circle cx="22.3" cy="21.8" r="18.4" fill="#fff"/>
<path d="M20.28,16.69 L19.77,15.16 L19.39,13.60 L19.21,11.97 L19.15,10.32 L19.20,8.66 L19.37,6.99 L19.66,5.31 L20.07,3.64 A18.3,18.3 0 0 1 28.56,4.60 L28.17,6.17 L27.75,7.72 L27.30,9.26 L26.82,10.79 L26.31,12.31 L25.77,13.82 L25.11,15.28 L24.41,16.72Z" fill="url(#bg0)"/><path d="M24.48,16.75 L25.20,15.32 L26.04,13.95 L27.07,12.67 L28.19,11.46 L29.40,10.32 L30.71,9.26 L32.10,8.27 L33.57,7.38 A18.3,18.3 0 0 1 38.89,14.07 L37.51,14.90 L36.11,15.70 L34.70,16.47 L33.28,17.22 L31.85,17.93 L30.40,18.61 L28.90,19.18 L27.39,19.70Z" fill="url(#bg1)"/><path d="M27.41,19.78 L28.94,19.27 L30.50,18.89 L32.13,18.71 L33.78,18.65 L35.44,18.70 L37.11,18.87 L38.79,19.16 L40.46,19.57 A18.3,18.3 0 0 1 39.50,28.06 L37.93,27.67 L36.38,27.25 L34.84,26.80 L33.31,26.32 L31.79,25.81 L30.28,25.27 L28.82,24.61 L27.38,23.91Z" fill="url(#bg0)"/><path d="M27.35,23.98 L28.78,24.70 L30.15,25.54 L31.43,26.57 L32.64,27.69 L33.78,28.90 L34.84,30.21 L35.83,31.60 L36.72,33.07 A18.3,18.3 0 0 1 30.03,38.39 L29.20,37.01 L28.40,35.61 L27.63,34.20 L26.88,32.78 L26.17,31.35 L25.49,29.90 L24.92,28.40 L24.40,26.89Z" fill="url(#bg1)"/><path d="M24.32,26.91 L24.83,28.44 L25.21,30.00 L25.39,31.63 L25.45,33.28 L25.40,34.94 L25.23,36.61 L24.94,38.29 L24.53,39.96 A18.3,18.3 0 0 1 16.04,39.00 L16.43,37.43 L16.85,35.88 L17.30,34.34 L17.78,32.81 L18.29,31.29 L18.83,29.78 L19.49,28.32 L20.19,26.88Z" fill="url(#bg0)"/><path d="M20.12,26.85 L19.40,28.28 L18.56,29.65 L17.53,30.93 L16.41,32.14 L15.20,33.28 L13.89,34.34 L12.50,35.33 L11.03,36.22 A18.3,18.3 0 0 1 5.71,29.53 L7.09,28.70 L8.49,27.90 L9.90,27.13 L11.32,26.38 L12.75,25.67 L14.20,24.99 L15.70,24.42 L17.21,23.90Z" fill="url(#bg1)"/><path d="M17.19,23.82 L15.66,24.33 L14.10,24.71 L12.47,24.89 L10.82,24.95 L9.16,24.90 L7.49,24.73 L5.81,24.44 L4.14,24.03 A18.3,18.3 0 0 1 5.10,15.54 L6.67,15.93 L8.22,16.35 L9.76,16.80 L11.29,17.28 L12.81,17.79 L14.32,18.33 L15.78,18.99 L17.22,19.69Z" fill="url(#bg0)"/><path d="M17.25,19.62 L15.82,18.90 L14.45,18.06 L13.17,17.03 L11.96,15.91 L10.82,14.70 L9.76,13.39 L8.77,12.00 L7.88,10.53 A18.3,18.3 0 0 1 14.57,5.21 L15.40,6.59 L16.20,7.99 L16.97,9.40 L17.72,10.82 L18.43,12.25 L19.11,13.70 L19.68,15.20 L20.20,16.71Z" fill="url(#bg1)"/>
<circle cx="22.3" cy="21.8" r="6.3" fill="url(#hub)" stroke="#4a4a4a" stroke-width="0.6"/>
<rect x="3.2" y="3.3" width="3" height="3" fill="#f2f2f2"/><rect x="38.2" y="3.3" width="3" height="3" fill="#f2f2f2"/>
<rect x="3.2" y="38" width="3" height="3" fill="#f2f2f2"/><rect x="38.2" y="38" width="3" height="3" fill="#f2f2f2"/>
<path d="M11,47.5 h21.2 v-1.5 h-2 v-1.9 h-1.7 v1.9 h-1.2 v-1.9 h-1.7 v1.9 h-1.2 v-1.9 h-1.7 v1.9 h-1.2 v-1.9 h-1.7 v1.9 h-1.2 v-1.9 h-1.7 v1.9 h-1.2 v-1.9 h-1.7 v1.9 h-2z" fill="#f4a51c"/></svg>
<svg style="left:560px;top:66px" width="34" height="34" viewBox="0 0 34 34"><path d="M14.39,8.34 L14.56,5.65 L18.24,5.65 L18.41,8.34 A8.6,8.6 0 0 1 20.89,9.37 L22.91,7.59 L25.51,10.19 L23.73,12.21 A8.6,8.6 0 0 1 24.76,14.69 L27.45,14.86 L27.45,18.54 L24.76,18.71 A8.6,8.6 0 0 1 23.73,21.19 L25.51,23.21 L22.91,25.81 L20.89,24.03 A8.6,8.6 0 0 1 18.41,25.06 L18.24,27.75 L14.56,27.75 L14.39,25.06 A8.6,8.6 0 0 1 11.91,24.03 L9.89,25.81 L7.29,23.21 L9.07,21.19 A8.6,8.6 0 0 1 8.04,18.71 L5.35,18.54 L5.35,14.86 L8.04,14.69 A8.6,8.6 0 0 1 9.07,12.21 L7.29,10.19 L9.89,7.59 L11.91,9.37 A8.6,8.6 0 0 1 14.39,8.34Z" fill="none" stroke="#4fa4e8" stroke-width="0.95" stroke-linejoin="round"/><circle cx="16.4" cy="16.7" r="5.8" fill="none" stroke="#7a839b" stroke-width="0.8"/></svg>
<svg style="left:526px;top:77px" width="12" height="8" viewBox="0 0 12 8"><path d="M0.3,0.8 H11.5 L5.9,6.9Z" fill="#000"/></svg>
<svg style="left:599px;top:77.9px" width="12" height="8" viewBox="0 0 12 8"><path d="M0.3,0.8 H11.1 L5.7,6.9Z" fill="#000"/></svg>
<svg style="left:1000px;top:10px" width="180" height="30" viewBox="0 0 180 30"><path d="M7,13 H23" stroke="#000" stroke-width="1.3"/><rect x="79.8" y="5.8" width="14.6" height="14.6" fill="none" stroke="#c4c4c4" stroke-width="1.2"/><path d="M154,5.7 L168.6,20.4 M168.6,5.7 L154,20.4" stroke="#000" stroke-width="1.4"/></svg>
<svg style="left:1160px;top:120px" width="14" height="12" viewBox="0 0 14 12"><path d="M2.2,8.6 L7,3.8 L11.8,8.6" fill="none" stroke="#505050" stroke-width="1.7"/></svg>
<svg style="left:1160px;top:528.5px" width="14" height="12" viewBox="0 0 14 12"><path d="M2.2,4 L7,8.8 L11.8,4" fill="none" stroke="#505050" stroke-width="1.7"/></svg>
<svg style="left:865.6px;top:425.8px" width="11" height="14" viewBox="0 0 11 14"><ellipse cx="5" cy="12.3" rx="3" ry="0.7" fill="#c8c8c8"/><path d="M4.6,0.6 L9.9,0.6 L7,4.6 L9.2,4.6 L1.9,12.6 L4,7 L1.3,7Z" fill="#ebd94f" stroke="#c9b649" stroke-width="0.6" stroke-linejoin="round"/><path d="M5.2,1.6 L8,1.6 L5.6,5.4 L7,5.4 L3.6,9.2 L5,6 L3,6Z" fill="#f6ee94"/></svg>
<svg style="left:865.6px;top:459.6px" width="11" height="14" viewBox="0 0 11 14"><ellipse cx="5" cy="12.3" rx="3" ry="0.7" fill="#c8c8c8"/><path d="M4.6,0.6 L9.9,0.6 L7,4.6 L9.2,4.6 L1.9,12.6 L4,7 L1.3,7Z" fill="#ebd94f" stroke="#c9b649" stroke-width="0.6" stroke-linejoin="round"/><path d="M5.2,1.6 L8,1.6 L5.6,5.4 L7,5.4 L3.6,9.2 L5,6 L3,6Z" fill="#f6ee94"/></svg>
<svg style="left:858px;top:519px" width="26" height="25" viewBox="0 0 26 25"><defs><linearGradient id="dk" x1="0" y1="0" x2="0" y2="1"><stop offset="0" stop-color="#b9b9b9"/><stop offset="0.75" stop-color="#e6e6e6"/><stop offset="1" stop-color="#fafafa"/></linearGradient></defs><path d="M3.2,1 H21.8 Q22.8,1 22.9,2 L24,20.2 H1 L2.1,2 Q2.2,1 3.2,1Z" fill="url(#dk)"/><path d="M1,20.2 H24 L24.3,22.2 Q24.3,23.4 23,23.4 H2 Q0.7,23.4 0.7,22.2Z" fill="#2e2e2e"/><rect x="8" y="21.3" width="5" height="1.1" fill="#e2c21a"/></svg>
<svg style="left:11px;top:11px" width="26" height="26" viewBox="0 0 26 26"><defs>
<linearGradient id="asq" x1="0" y1="0" x2="0" y2="1"><stop offset="0" stop-color="#cfd4e3"/><stop offset="0.5" stop-color="#a3aabe"/><stop offset="1" stop-color="#868da2"/></linearGradient>
<linearGradient id="ab0" x1="0" y1="0" x2="1" y2="1"><stop offset="0" stop-color="#052a86"/><stop offset="1" stop-color="#35a8ff"/></linearGradient>
<linearGradient id="ab1" x1="1" y1="0" x2="0" y2="1"><stop offset="0" stop-color="#52c6ff"/><stop offset="1" stop-color="#06349a"/></linearGradient></defs>
<rect x="0.2" y="0.2" width="25.6" height="25" rx="5.2" fill="url(#asq)"/>
<circle cx="3.7" cy="3.6" r="0.85" fill="#596076"/><circle cx="22.3" cy="3.6" r="0.85" fill="#596076"/><circle cx="3.7" cy="21.9" r="0.85" fill="#596076"/><circle cx="22.3" cy="21.9" r="0.85" fill="#596076"/>
<circle cx="13" cy="12.6" r="10.7" fill="#dfe4ee"/>
<circle cx="13" cy="12.6" r="10.1" fill="#3c4767"/>
<circle cx="13" cy="12.6" r="9.6" fill="#0a3fae"/>
<path d="M12.24,9.70 L12.17,8.87 L12.17,8.02 L12.25,7.18 L12.40,6.33 L12.61,5.49 L12.90,4.65 L13.25,3.83 L13.67,3.02 A9.6,9.6 0 0 1 19.84,5.86 L19.13,6.32 L18.44,6.80 L17.77,7.31 L17.13,7.84 L16.50,8.39 L15.90,8.97 L15.33,9.57 L14.76,10.17Z" fill="#0a3aa6"/><path d="M12.53,9.43 L12.55,8.64 L12.64,7.84 L12.78,7.04 L12.98,6.25 L13.24,5.47 L13.55,4.69 L13.92,3.94 L14.35,3.20 A9.5,9.5 0 0 1 17.44,4.20 L16.88,4.80 L16.36,5.42 L15.86,6.06 L15.40,6.72 L14.98,7.40 L14.59,8.10 L14.23,8.81 L13.91,9.53Z" fill="#2f9df5"/><path d="M12.66,8.11 L12.79,7.49 L12.96,6.88 L13.17,6.26 L13.42,5.66 L13.72,5.07 L14.05,4.49 L14.43,3.93 L14.84,3.38 A9.4,9.4 0 0 1 16.24,3.77 L15.80,4.27 L15.40,4.78 L15.02,5.31 L14.67,5.85 L14.36,6.41 L14.08,6.98 L13.83,7.55 L13.61,8.14Z" fill="#5cc8ff"/><path d="M14.38,9.71 L14.84,9.05 L15.35,8.42 L15.91,7.82 L16.51,7.25 L17.15,6.72 L17.84,6.23 L18.56,5.78 L19.31,5.37 A9.6,9.6 0 0 1 20.18,6.23 L19.42,6.59 L18.69,6.98 L17.98,7.40 L17.30,7.86 L16.65,8.36 L16.03,8.88 L15.44,9.43 L14.88,10.01Z" fill="#06257a"/><path d="M14.80,10.20 L15.40,9.62 L16.06,9.10 L16.77,8.63 L17.53,8.22 L18.32,7.86 L19.15,7.56 L20.01,7.33 L20.90,7.15 A9.6,9.6 0 0 1 22.53,13.75 L21.73,13.48 L20.92,13.24 L20.11,13.03 L19.29,12.86 L18.47,12.72 L17.65,12.61 L16.82,12.53 L16.00,12.47Z" fill="#0a3aa6"/><path d="M15.18,10.26 L15.82,9.78 L16.50,9.35 L17.21,8.96 L17.95,8.62 L18.72,8.34 L19.52,8.10 L20.35,7.92 L21.19,7.79 A9.5,9.5 0 0 1 22.34,10.84 L21.52,10.77 L20.71,10.75 L19.90,10.76 L19.09,10.82 L18.30,10.91 L17.51,11.03 L16.73,11.20 L15.97,11.40Z" fill="#2f9df5"/><path d="M16.30,9.54 L16.86,9.25 L17.45,9.00 L18.06,8.78 L18.69,8.61 L19.33,8.47 L19.99,8.37 L20.67,8.31 L21.35,8.29 A9.4,9.4 0 0 1 21.92,9.63 L21.26,9.60 L20.60,9.60 L19.96,9.64 L19.32,9.70 L18.69,9.80 L18.07,9.94 L17.46,10.10 L16.86,10.29Z" fill="#5cc8ff"/><path d="M16.12,11.88 L16.92,11.82 L17.74,11.83 L18.56,11.89 L19.37,12.01 L20.19,12.18 L21.00,12.41 L21.80,12.69 L22.59,13.03 A9.6,9.6 0 0 1 22.46,14.24 L21.71,13.87 L20.94,13.54 L20.17,13.26 L19.39,13.01 L18.60,12.81 L17.80,12.65 L17.00,12.54 L16.20,12.46Z" fill="#06257a"/><path d="M16.00,12.51 L16.82,12.62 L17.65,12.81 L18.45,13.08 L19.25,13.41 L20.02,13.81 L20.77,14.27 L21.50,14.79 L22.19,15.38 A9.6,9.6 0 0 1 18.05,20.77 L17.76,19.97 L17.44,19.19 L17.10,18.43 L16.72,17.68 L16.32,16.95 L15.89,16.24 L15.44,15.55 L14.97,14.86Z" fill="#0a3aa6"/><path d="M16.19,12.85 L16.96,13.04 L17.72,13.30 L18.47,13.62 L19.20,13.99 L19.90,14.42 L20.58,14.90 L21.24,15.43 L21.87,16.01 A9.5,9.5 0 0 1 20.20,18.80 L19.74,18.12 L19.25,17.47 L18.74,16.85 L18.19,16.25 L17.63,15.69 L17.04,15.15 L16.42,14.65 L15.79,14.17Z" fill="#2f9df5"/><path d="M17.45,13.27 L18.03,13.53 L18.59,13.83 L19.14,14.18 L19.67,14.56 L20.18,14.97 L20.67,15.43 L21.14,15.92 L21.58,16.44 A9.4,9.4 0 0 1 20.88,17.72 L20.50,17.18 L20.09,16.68 L19.66,16.19 L19.20,15.73 L18.73,15.30 L18.24,14.90 L17.74,14.53 L17.21,14.18Z" fill="#5cc8ff"/><path d="M15.51,14.59 L16.05,15.18 L16.56,15.83 L17.02,16.50 L17.44,17.21 L17.81,17.96 L18.14,18.73 L18.42,19.54 L18.65,20.36 A9.6,9.6 0 0 1 17.61,21.02 L17.43,20.20 L17.22,19.40 L16.96,18.62 L16.66,17.85 L16.32,17.11 L15.95,16.38 L15.54,15.69 L15.10,15.01Z" fill="#06257a"/><path d="M14.94,14.89 L15.37,15.60 L15.73,16.36 L16.03,17.16 L16.26,17.99 L16.44,18.84 L16.54,19.72 L16.58,20.61 L16.55,21.52 A9.6,9.6 0 0 1 9.76,21.64 L10.20,20.92 L10.61,20.18 L11.00,19.44 L11.35,18.68 L11.67,17.91 L11.96,17.13 L12.22,16.34 L12.46,15.55Z" fill="#0a3aa6"/><path d="M14.80,15.25 L15.12,15.97 L15.39,16.73 L15.61,17.51 L15.77,18.31 L15.88,19.13 L15.93,19.96 L15.93,20.81 L15.86,21.66 A9.5,9.5 0 0 1 12.64,22.09 L12.88,21.31 L13.09,20.52 L13.26,19.73 L13.38,18.94 L13.47,18.14 L13.52,17.35 L13.53,16.55 L13.51,15.76Z" fill="#2f9df5"/><path d="M15.25,16.50 L15.41,17.11 L15.52,17.74 L15.60,18.38 L15.63,19.03 L15.62,19.69 L15.57,20.36 L15.48,21.03 L15.34,21.70 A9.4,9.4 0 0 1 13.91,21.96 L14.09,21.32 L14.23,20.68 L14.34,20.04 L14.42,19.40 L14.46,18.77 L14.47,18.13 L14.45,17.50 L14.39,16.88Z" fill="#5cc8ff"/><path d="M13.01,15.80 L12.88,16.60 L12.70,17.39 L12.45,18.17 L12.16,18.94 L11.81,19.70 L11.41,20.44 L10.95,21.16 L10.45,21.86 A9.6,9.6 0 0 1 9.29,21.46 L9.82,20.81 L10.31,20.13 L10.76,19.44 L11.18,18.73 L11.55,18.01 L11.88,17.27 L12.17,16.51 L12.43,15.75Z" fill="#06257a"/><path d="M12.42,15.54 L12.13,16.33 L11.76,17.08 L11.32,17.81 L10.82,18.51 L10.26,19.18 L9.64,19.81 L8.97,20.39 L8.24,20.94 A9.6,9.6 0 0 1 3.92,15.70 L4.75,15.60 L5.58,15.46 L6.41,15.30 L7.22,15.10 L8.02,14.87 L8.81,14.61 L9.58,14.32 L10.36,14.02Z" fill="#0a3aa6"/><path d="M12.05,15.66 L11.69,16.36 L11.26,17.05 L10.79,17.70 L10.26,18.33 L9.69,18.92 L9.07,19.48 L8.41,20.01 L7.70,20.49 A9.5,9.5 0 0 1 5.35,18.24 L6.12,17.94 L6.86,17.61 L7.58,17.25 L8.28,16.85 L8.96,16.43 L9.61,15.97 L10.24,15.48 L10.85,14.97Z" fill="#2f9df5"/><path d="M11.36,16.79 L10.97,17.29 L10.55,17.78 L10.10,18.23 L9.61,18.67 L9.09,19.07 L8.54,19.45 L7.95,19.79 L7.34,20.11 A9.4,9.4 0 0 1 6.25,19.15 L6.86,18.89 L7.45,18.60 L8.02,18.29 L8.56,17.95 L9.09,17.59 L9.59,17.20 L10.07,16.79 L10.52,16.35Z" fill="#5cc8ff"/><path d="M10.51,14.60 L9.80,15.00 L9.06,15.35 L8.30,15.65 L7.51,15.90 L6.71,16.10 L5.88,16.24 L5.03,16.34 L4.17,16.38 A9.6,9.6 0 0 1 3.77,15.22 L4.60,15.23 L5.43,15.20 L6.25,15.12 L7.07,15.00 L7.87,14.84 L8.65,14.64 L9.42,14.39 L10.18,14.11Z" fill="#06257a"/><path d="M10.34,13.98 L9.55,14.24 L8.72,14.42 L7.88,14.54 L7.02,14.58 L6.15,14.56 L5.27,14.47 L4.39,14.31 L3.51,14.08 A9.6,9.6 0 0 1 4.91,7.43 L5.51,8.02 L6.14,8.59 L6.78,9.13 L7.44,9.64 L8.12,10.12 L8.81,10.58 L9.52,11.00 L10.24,11.42Z" fill="#0a3aa6"/><path d="M10.02,13.76 L9.24,13.92 L8.44,14.01 L7.63,14.05 L6.81,14.03 L5.99,13.96 L5.17,13.82 L4.35,13.63 L3.53,13.38 A9.5,9.5 0 0 1 3.82,10.14 L4.53,10.55 L5.25,10.92 L5.99,11.26 L6.74,11.56 L7.49,11.83 L8.26,12.05 L9.03,12.24 L9.81,12.40Z" fill="#2f9df5"/><path d="M8.70,13.93 L8.07,13.94 L7.43,13.91 L6.79,13.84 L6.14,13.73 L5.50,13.58 L4.86,13.38 L4.23,13.14 L3.60,12.86 A9.4,9.4 0 0 1 3.68,11.41 L4.26,11.72 L4.85,12.00 L5.45,12.25 L6.05,12.47 L6.66,12.65 L7.28,12.80 L7.90,12.92 L8.52,13.00Z" fill="#5cc8ff"/><path d="M9.88,11.90 L9.13,11.60 L8.40,11.24 L7.69,10.83 L7.00,10.37 L6.34,9.86 L5.71,9.30 L5.11,8.70 L4.54,8.06 A9.6,9.6 0 0 1 5.19,7.02 L5.71,7.68 L6.25,8.30 L6.83,8.90 L7.42,9.46 L8.05,9.98 L8.70,10.47 L9.37,10.92 L10.06,11.34Z" fill="#06257a"/><path d="M10.26,11.38 L9.56,10.93 L8.91,10.39 L8.29,9.80 L7.72,9.16 L7.20,8.47 L6.72,7.72 L6.30,6.94 L5.93,6.11 A9.6,9.6 0 0 1 12.00,3.05 L11.91,3.89 L11.86,4.73 L11.84,5.57 L11.85,6.41 L11.90,7.24 L11.97,8.06 L12.08,8.89 L12.20,9.71Z" fill="#0a3aa6"/><path d="M10.23,10.99 L9.62,10.48 L9.05,9.92 L8.52,9.31 L8.02,8.66 L7.57,7.97 L7.16,7.24 L6.80,6.48 L6.49,5.68 A9.5,9.5 0 0 1 9.21,3.89 L9.32,4.70 L9.48,5.50 L9.67,6.28 L9.90,7.06 L10.17,7.81 L10.47,8.55 L10.80,9.27 L11.17,9.98Z" fill="#2f9df5"/><path d="M9.28,10.07 L8.87,9.58 L8.50,9.06 L8.15,8.52 L7.84,7.94 L7.56,7.35 L7.32,6.72 L7.11,6.08 L6.94,5.41 A9.4,9.4 0 0 1 8.12,4.57 L8.24,5.22 L8.38,5.85 L8.56,6.48 L8.77,7.09 L9.01,7.68 L9.28,8.25 L9.57,8.81 L9.89,9.35Z" fill="#5cc8ff"/><path d="M11.60,9.72 L11.37,8.95 L11.20,8.15 L11.07,7.34 L11.01,6.52 L10.99,5.69 L11.03,4.85 L11.13,4.00 L11.28,3.16 A9.6,9.6 0 0 1 12.50,3.01 L12.30,3.83 L12.15,4.65 L12.05,5.46 L11.98,6.28 L11.96,7.10 L11.98,7.91 L12.05,8.72 L12.15,9.51Z" fill="#06257a"/>
<circle cx="13" cy="12.6" r="3.6" fill="#eef1f7" stroke="#b9c4dc" stroke-width="0.5"/>
<path d="M12.4,10.2 A2.5,2.5 0 0 1 15.4,13.2" fill="none" stroke="#e2506a" stroke-width="0.8"/>
<path d="M10.6,13.0 A2.5,2.5 0 0 1 12,10.3" fill="none" stroke="#78b5ee" stroke-width="0.8"/>
<path d="M12,14.0 L14,11.4" stroke="#56607a" stroke-width="0.8"/>
</svg>
<div class="abs" id="frame"></div>
<div class="abs" style="left:1px;top:1px;width:1px;height:613px;background:#747474;z-index:51"></div>

</body></html>
